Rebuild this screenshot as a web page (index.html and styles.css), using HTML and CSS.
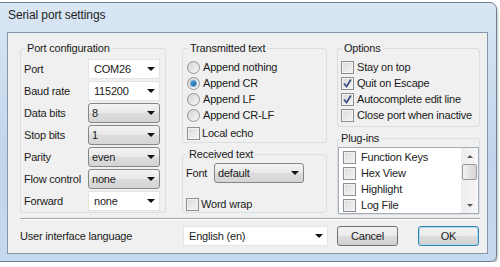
FILE: index.html
```html
<!DOCTYPE html>
<html lang="en">
<head>
    <meta charset="UTF-8">
    <title>Serial port settings</title>
    <link rel="stylesheet" href="styles.css">
</head>
<body>
    <div class="window">
        <div class="titlebar">Serial port settings</div>
        <div class="client">
            <div class="groups">
                <fieldset class="group port">
                    <legend>Port configuration</legend>
                    <div class="form-grid">
                        <span>Port</span><span class="combo edit">COM26</span>
                        <span>Baud rate</span><span class="combo edit">115200</span>
                        <span>Data bits</span><span class="combo drop">8</span>
                        <span>Stop bits</span><span class="combo drop">1</span>
                        <span>Parity</span><span class="combo drop">even</span>
                        <span>Flow control</span><span class="combo drop">none</span>
                        <span>Forward</span><span class="combo edit">none</span>
                    </div>
                </fieldset>

                <div class="column middle">
                    <fieldset class="group transmitted">
                        <legend>Transmitted text</legend>
                        <div class="opt"><span class="radio"></span>Append nothing</div>
                        <div class="opt"><span class="radio on"></span>Append CR</div>
                        <div class="opt"><span class="radio"></span>Append LF</div>
                        <div class="opt"><span class="radio"></span>Append CR-LF</div>
                        <div class="opt echo"><span class="check"></span>Local echo</div>
                    </fieldset>
                    <fieldset class="group received">
                        <legend>Received text</legend>
                        <div class="font-row">
                            <span class="font-label">Font</span>
                            <span class="combo drop font-combo">default</span>
                        </div>
                        <div class="opt wrap"><span class="check"></span>Word wrap</div>
                    </fieldset>
                </div>

                <div class="column right">
                    <fieldset class="group options">
                        <legend>Options</legend>
                        <div class="opt"><span class="check"></span>Stay on top</div>
                        <div class="opt"><span class="check on"><svg width="11" height="11" viewBox="0 0 11 11"><path d="M2 5.5 L4.5 8.5 L9 1.5" fill="none" stroke="#3d5487" stroke-width="1.8"/></svg></span>Quit on Escape</div>
                        <div class="opt"><span class="check on"><svg width="11" height="11" viewBox="0 0 11 11"><path d="M2 5.5 L4.5 8.5 L9 1.5" fill="none" stroke="#3d5487" stroke-width="1.8"/></svg></span>Autocomplete edit line</div>
                        <div class="opt"><span class="check"></span>Close port when inactive</div>
                    </fieldset>
                    <fieldset class="group plugins">
                        <legend>Plug-ins</legend>
                        <div class="listbox">
                            <div class="items">
                                <div class="opt item"><span class="check"></span>Function Keys</div>
                                <div class="opt item"><span class="check"></span>Hex View</div>
                                <div class="opt item"><span class="check"></span>Highlight</div>
                                <div class="opt item"><span class="check"></span>Log File</div>
                            </div>
                            <div class="scrollbar">
                                <span class="sb-btn up"></span>
                                <span class="thumb"></span>
                                <span class="sb-space"></span>
                                <span class="sb-btn down"></span>
                            </div>
                        </div>
                    </fieldset>
                </div>
            </div>

            <div class="separator"></div>

            <div class="bottom-row">
                <span class="lang-label">User interface language</span>
                <span class="combo edit lang">English (en)</span>
                <span class="btn cancel">Cancel</span>
                <span class="btn ok">OK</span>
            </div>
        </div>
    </div>
</body>
</html>
```

FILE: styles.css
```css
body {
    margin: 0;
    background-color: #fff;
    font-family: "Liberation Sans", Arial, sans-serif;
    font-size: 11px;
    letter-spacing: -0.2px;
    color: #1b1b1b;
    overflow: hidden;
}
.window {
    margin: 2px 0 0 -1px;
    width: 498px;
    height: 260px;
    box-sizing: border-box;
    border: 1px solid #6f7f8f;
    border-radius: 0 7px 6px 0;
    background: linear-gradient(#d9e6f4, #c0d5eb 60%, #c6d9ee);
    padding: 0 8px 7px 7px;
    display: flex;
    flex-direction: column;
    box-shadow: 0 2px 3px rgba(0, 0, 0, 0.45);
}
.titlebar {
    height: 29px;
    line-height: 24px;
    padding-left: 1px;
    font-size: 12px;
    letter-spacing: -0.1px;
    color: #1e1e1e;
}
.client {
    flex: 1;
    background-color: #f0f0f0;
    border: 1px solid #8696a6;
    padding: 8px 7px 0 12px;
}
.groups {
    display: flex;
    align-items: flex-start;
}
.group {
    margin: 0;
    border: 1px solid #d5dfe5;
    border-radius: 3px;
    min-width: 0;
    box-sizing: border-box;
}
legend {
    padding: 0 2px;
    margin-left: 1px;
    line-height: 14px;
}
.port {
    width: 146px;
    padding: 4px 5px 1px 3px;
}
.form-grid {
    display: grid;
    grid-template-columns: 64px 72px;
    grid-auto-rows: 20px;
    row-gap: 2px;
    align-items: center;
}
.column {
    display: flex;
    flex-direction: column;
}
.middle {
    width: 145px;
    margin-left: 16px;
}
.right {
    width: 143px;
    margin-left: 10px;
}

/* combo boxes */
.combo {
    height: 20px;
    box-sizing: border-box;
    display: flex;
    align-items: center;
    padding-left: 5px;
}
.combo::after {
    content: "";
    margin-left: auto;
    margin-right: 4px;
    border-top: 4px solid #111;
    border-left: 4px solid transparent;
    border-right: 4px solid transparent;
}
.combo.edit {
    background-color: #fff;
    border: 1px solid #e4e4e4;
}
.combo.drop {
    background: linear-gradient(#f3f3f3, #e8e8e8 50%, #dcdcdc 51%, #d5d5d5);
    border: 1px solid #868686;
    border-radius: 3px;
    padding-left: 3px;
}

/* radios and checkboxes */
.opt {
    display: flex;
    align-items: center;
    height: 16px;
    gap: 3px;
}
.radio {
    width: 13px;
    height: 13px;
    box-sizing: border-box;
    border-radius: 50%;
    border: 1px solid #939393;
    background: linear-gradient(135deg, #d4d4d4, #f7f7f7);
    display: flex;
    align-items: center;
    justify-content: center;
}
.radio.on::after {
    content: "";
    width: 5px;
    height: 5px;
    border-radius: 50%;
    background: radial-gradient(circle at 40% 40%, #3b9be0, #0f4c82);
    box-shadow: 0 0 0 1px #6fa7d3;
}
.check {
    width: 13px;
    height: 13px;
    box-sizing: border-box;
    border: 1px solid #8f8f8f;
    background: linear-gradient(135deg, #d9d9d9, #f6f6f6);
    box-shadow: inset 0 0 0 1px #f2f2f2;
    display: flex;
}
.check svg {
    display: block;
}
.transmitted {
    padding: 4px 4px 1px 4px;
}
.echo {
    margin-top: 2px;
    gap: 2px;
}
.received {
    margin-top: 4px;
    padding: 2px 4px 0 3px;
}
.font-row {
    display: flex;
    align-items: center;
    height: 20px;
}
.font-label {
    width: 28px;
}
.font-combo {
    width: 90px;
}
.wrap {
    margin-top: 13px;
    gap: 2px;
}
.options {
    padding: 4px 4px 3px 3px;
}
.plugins {
    margin-top: 4px;
    padding: 2px 0 0 0;
}

/* plug-in list */
.listbox {
    height: 67px;
    box-sizing: border-box;
    border: 1px solid #a9aeb5;
    background-color: #fff;
    display: flex;
    overflow: hidden;
}
.items {
    flex: 1;
    padding: 1px 0 0 4px;
}
.item {
    gap: 5px;
}
.scrollbar {
    width: 17px;
    display: flex;
    flex-direction: column;
    background: linear-gradient(to right, #ececec, #f7f7f7);
}
.sb-btn {
    height: 16px;
    display: flex;
    align-items: center;
    justify-content: center;
}
.sb-btn.up::after {
    content: "";
    border-bottom: 3px solid #5a5a5a;
    border-left: 3px solid transparent;
    border-right: 3px solid transparent;
}
.sb-btn.down::after {
    content: "";
    border-top: 3px solid #5a5a5a;
    border-left: 3px solid transparent;
    border-right: 3px solid transparent;
}
.thumb {
    height: 16px;
    margin: 0 1px;
    box-sizing: border-box;
    border: 1px solid #9b9b9b;
    border-radius: 2px;
    background: linear-gradient(to right, #f4f4f4, #e2e2e2 50%, #d6d6d6);
}
.sb-space {
    flex: 1;
}

.separator {
    margin-top: 3px;
    border-top: 1px solid #a4a4a4;
    border-bottom: 1px solid #fff;
}

/* bottom row */
.bottom-row {
    display: flex;
    align-items: center;
    height: 20px;
    margin-top: 6px;
}
.lang-label {
    width: 163px;
}
.combo.lang {
    width: 145px;
}
.btn {
    height: 20px;
    width: 61px;
    box-sizing: border-box;
    border: 1px solid #707070;
    border-radius: 3px;
    background: linear-gradient(#f2f2f2, #ebebeb 50%, #dddddd 51%, #cfcfcf);
    display: flex;
    align-items: center;
    justify-content: center;
}
.cancel {
    margin-left: 9px;
}
.ok {
    margin-left: 20px;
    border-color: #3c7fb1;
    box-shadow: inset 0 0 0 1px #a8dcf3;
}
```
